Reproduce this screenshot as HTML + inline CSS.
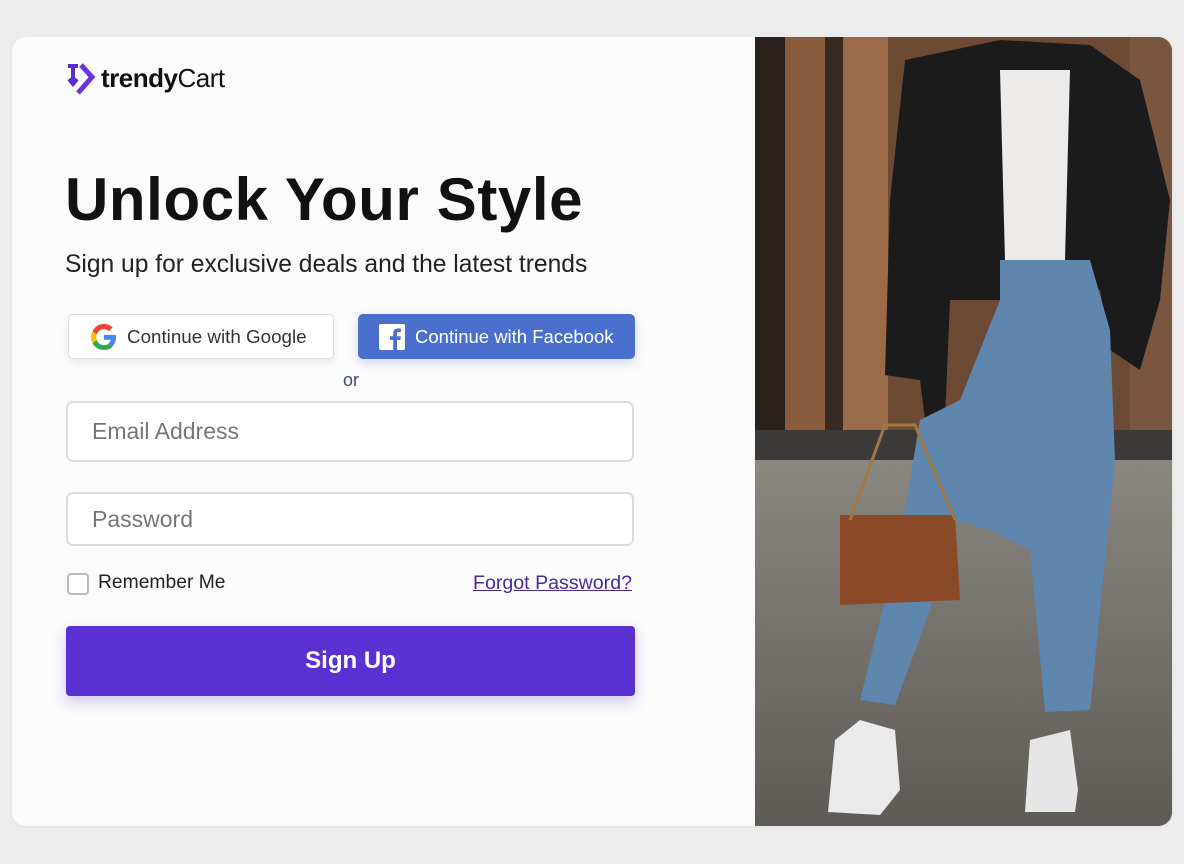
<!DOCTYPE html>
<html><head><style>
*{margin:0;padding:0;box-sizing:border-box}
body{width:1184px;height:864px;background:#ececec;font-family:"Liberation Sans",sans-serif;position:relative;overflow:hidden}
.card{position:absolute;left:12px;top:37px;width:1160px;height:789px;background:#fbfbfb;border-radius:14px;overflow:hidden;box-shadow:0 1px 4px rgba(0,0,0,.05)}
.abs{position:absolute}
.btn{position:absolute;border-radius:5px;font-size:18.8px;display:flex;align-items:center}
.inp{position:absolute;left:54px;width:568px;border:2px solid #dcdcdc;border-radius:7px;background:#fff;font-size:23px;color:#777;padding-left:24px;display:flex;align-items:center}
</style></head><body>
<div class="card">
  <svg class="abs" style="left:52px;top:26px" width="34" height="34" viewBox="0 0 34 34">
    <path d="M4 3 L14 3 M9 3 V20 M5 16 L9 21 L13 16" stroke="#5b2bd0" stroke-width="4" fill="none"/>
    <path d="M17 2 L28 14 L14 30" stroke="#6a35e0" stroke-width="5" fill="none"/>
  </svg>
  <div class="abs" style="left:89px;top:26px;font-size:26px;font-weight:bold;color:#111;letter-spacing:-0.5px">trendy<span style="font-weight:normal">Cart</span></div>
  <div class="abs" style="left:53px;top:128px;font-size:60px;font-weight:bold;color:#111;letter-spacing:0.6px">Unlock Your Style</div>
  <div class="abs" style="left:53px;top:214px;font-size:24.6px;color:#222">Sign up for exclusive deals and the latest trends</div>
  <div class="btn" style="left:56px;top:277px;width:266px;height:45px;background:#fff;border:1px solid #ddd;box-shadow:0 3px 8px rgba(0,0,0,.08);color:#333">
    <svg style="margin:0 10px 0 22px" width="26" height="26" viewBox="0 0 48 48"><path fill="#EA4335" d="M24 9.5c3.5 0 6.6 1.2 9.1 3.6l6.8-6.8C35.8 2.4 30.3 0 24 0 14.6 0 6.6 5.4 2.7 13.3l7.9 6.1C12.5 13.6 17.7 9.5 24 9.5z"/><path fill="#4285F4" d="M46.1 24.5c0-1.6-.1-3.1-.4-4.5H24v9h12.4c-.5 2.9-2.2 5.3-4.6 7l7.200 5.6c4.2-3.9 7.1-9.6 7.1-17.1z"/><path fill="#FBBC05" d="M10.5 28.6c-.5-1.4-.8-3-.8-4.6s.3-3.2.8-4.6l-7.9-6.1C1 16.6 0 20.2 0 24s.9 7.4 2.6 10.7l7.9-6.1z"/><path fill="#34A853" d="M24 48c6.5 0 11.9-2.1 15.9-5.8l-7.2-5.6c-2.2 1.5-5 2.4-8.7 2.4-6.3 0-11.6-4.2-13.5-9.9l-7.9 6.1C6.5 42.6 14.6 48 24 48z"/></svg>Continue with Google</div>
  <div class="btn" style="left:346px;top:277px;width:277px;height:45px;background:#4a6fcd;color:#fff;font-size:18.5px;box-shadow:0 4px 10px rgba(74,111,205,.25)">
    <svg style="margin:0 10px 0 21px" width="26" height="26" viewBox="0 0 26 26"><rect width="26" height="26" rx="2" fill="#fff"/><path d="M18 26V16h3.3l.5-3.8H18V9.8c0-1.1.3-1.8 1.9-1.8h2V4.6c-.4 0-1.5-.2-2.9-.2-2.9 0-4.8 1.8-4.8 5v2.8H11V16h3.2v10z" fill="#4a6fcd"/></svg>Continue with Facebook</div>
  <div class="abs" style="left:331px;top:333px;font-size:18px;color:#3d4a6a">or</div>
  <div class="inp" style="top:364px;height:61px">Email Address</div>
  <div class="inp" style="top:455px;height:54px">Password</div>
  <div class="abs" style="left:55px;top:536px;width:22px;height:22px;border:2px solid #bbb;border-radius:4px;background:#fff"></div>
  <div class="abs" style="left:86px;top:535px;font-size:19.3px;color:#222">Remember Me</div>
  <div class="abs" style="left:461px;top:535px;font-size:19.6px;color:#4b2a9a;text-decoration:underline">Forgot Password?</div>
  <div class="abs" style="left:54px;top:589px;width:569px;height:70px;background:#5a30d2;border-radius:4px;color:#fff;font-size:24px;font-weight:bold;display:flex;align-items:center;justify-content:center;box-shadow:0 6px 14px rgba(90,48,210,.25)">Sign Up</div>
  <svg class="abs" style="left:743px;top:0" width="417" height="789" viewBox="755 37 417 789">
    <defs><linearGradient id="pv" x1="0" y1="0" x2="0" y2="1"><stop offset="0" stop-color="#8a8680"/><stop offset="1" stop-color="#5e5b57"/></linearGradient></defs>
    <rect x="755" y="37" width="417" height="789" fill="#6d4a34"/>
    <rect x="755" y="37" width="30" height="430" fill="#2a211c"/>
    <rect x="785" y="37" width="40" height="430" fill="#8a5c3e"/>
    <rect x="825" y="37" width="18" height="430" fill="#3a2b22"/>
    <rect x="843" y="37" width="45" height="430" fill="#9a6b49"/>
    <rect x="1130" y="37" width="42" height="430" fill="#7a5540"/>
    <rect x="755" y="430" width="417" height="40" fill="#3b3a38"/>
    <rect x="755" y="460" width="417" height="366" fill="url(#pv)"/>
    <path d="M905 60 L1000 40 L1090 45 L1140 80 L1170 200 L1160 300 L1140 370 L1110 350 L1100 290 L1000 300 L950 300 L945 420 L925 420 L920 380 L885 375 L890 200 Z" fill="#1c1b1c"/>
    <path d="M1000 70 L1070 70 L1065 260 L1005 260 Z" fill="#ecebea"/>
    <path d="M1000 260 L1090 260 L1110 330 L1115 460 L1090 710 L1045 712 L1030 550 L990 530 L955 520 L930 610 L895 705 L860 700 L900 540 L920 420 L960 400 L1000 300 Z" fill="#5f86ad"/>
    <path d="M840 515 L955 515 L960 600 L840 605 Z" fill="#8a4a28"/>
    <path d="M850 520 L885 425 L915 425 L955 520" stroke="#a07844" stroke-width="3" fill="none"/>
    <path d="M835 740 L860 720 L895 730 L900 790 L880 815 L828 812 Z" fill="#eaeaea"/>
    <path d="M1030 740 L1070 730 L1078 790 L1075 812 L1025 812 Z" fill="#e6e6e6"/>
  </svg>
</div>
</body></html>
